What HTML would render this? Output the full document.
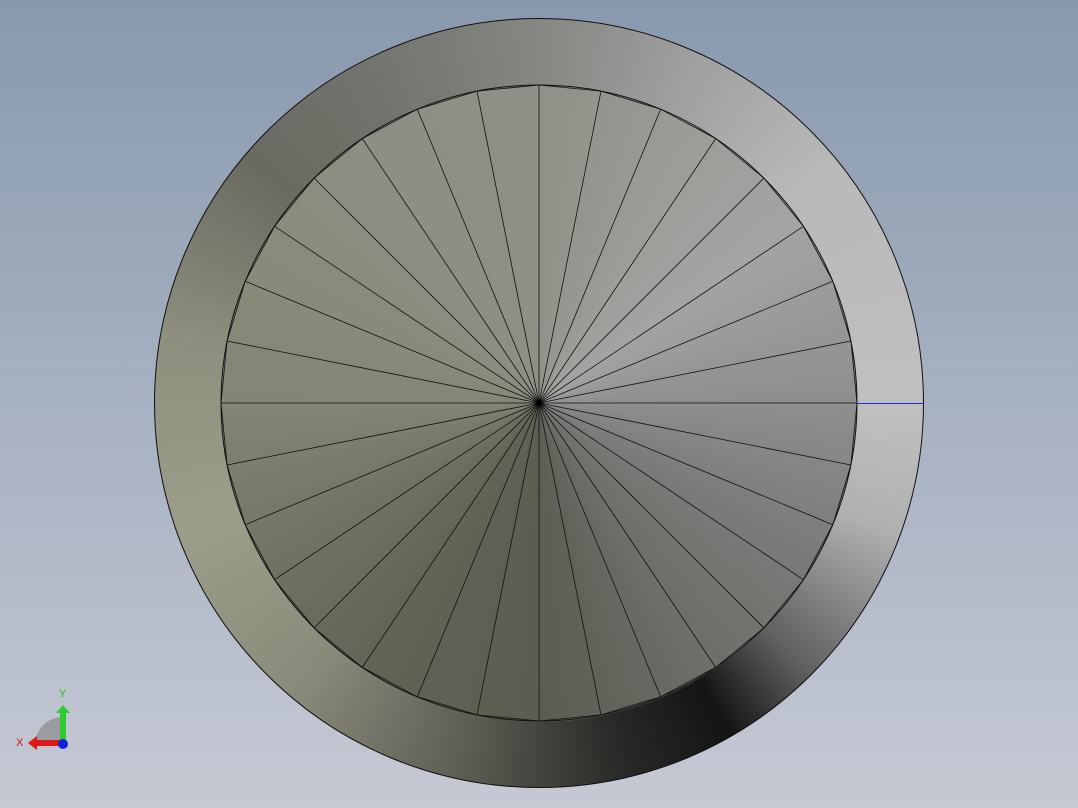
<!DOCTYPE html>
<html><head><style>
html,body{margin:0;padding:0}
body{width:1078px;height:808px;overflow:hidden;position:relative;background:linear-gradient(#8899ae,#c5c9d4);}
.ring{position:absolute;left:154px;top:18px;width:770px;height:770px;border-radius:50%;
background:conic-gradient(from 0deg,#868682 0deg,#a0a0a0 25deg,#b8b8b8 50deg,#c0c0c0 90deg,#b0b0b0 110deg,#606060 135deg,#141414 150deg,#2a2a28 168deg,#5a5a52 190deg,#8a8a7a 220deg,#9c9d8a 250deg,#8e8f7e 280deg,#6a6a60 310deg,#747470 335deg,#868682 360deg);}
.inner{position:absolute;left:221px;top:86px;width:636px;height:636px;border-radius:50%;
background:conic-gradient(from 0deg,#909088 0deg,#9c9c98 30deg,#a4a4a4 55deg,#8e8e8e 90deg,#7a7a78 120deg,#6c6c68 150deg,#5c5c52 180deg,#626255 210deg,#737364 240deg,#858575 270deg,#8b8b7c 300deg,#8e8e84 330deg,#909088 360deg);}
svg{position:absolute;left:0;top:0}
.blue{position:absolute;left:857px;top:403px;width:66px;height:1px;background:#1530e0}
</style></head><body>
<div class="ring"></div>
<div class="inner"></div>
<svg width="1078" height="808" viewBox="0 0 1078 808">
<circle cx="539" cy="403" r="384.5" fill="none" stroke="#111" stroke-width="1"/>
<circle cx="539" cy="403" r="318" fill="none" stroke="#111" stroke-width="1"/>
<g stroke="#111" stroke-width="0.8" id="spokes"></g>
<circle cx="539" cy="403" r="3" fill="#000"/>
<path d="M35 745 A28 28 0 0 1 63 717 L63 745 Z" fill="#9a9ca2"/>
<rect x="60" y="712" width="6" height="32" fill="#2ecc2e"/>
<polygon points="56,713 70,713 63,705" fill="#2ecc2e"/>
<rect x="36" y="740" width="26" height="6" fill="#e01818"/>
<polygon points="37,736 37,750 28,743" fill="#e01818"/>
<circle cx="63" cy="744" r="5" fill="#1020e0"/>
<text x="16" y="746" font-family="Liberation Sans,sans-serif" font-size="11" fill="#d01010">X</text>
<text x="59" y="697" font-family="Liberation Sans,sans-serif" font-size="11" fill="#20c020">Y</text>
</svg>
<div class="blue"></div>
<script>
var g=document.getElementById('spokes'),s='',N=32,pts=[];
for(var i=0;i<N;i++){var a=i*2*Math.PI/N;var x=539+318*Math.cos(a),y=403-318*Math.sin(a);
s+='<line x1="539" y1="403" x2="'+x.toFixed(1)+'" y2="'+y.toFixed(1)+'"/>';pts.push(x.toFixed(1)+','+y.toFixed(1));}
s+='<polygon points="'+pts.join(' ')+'" fill="none"/>';
g.innerHTML=s;
</script>
</body></html>
